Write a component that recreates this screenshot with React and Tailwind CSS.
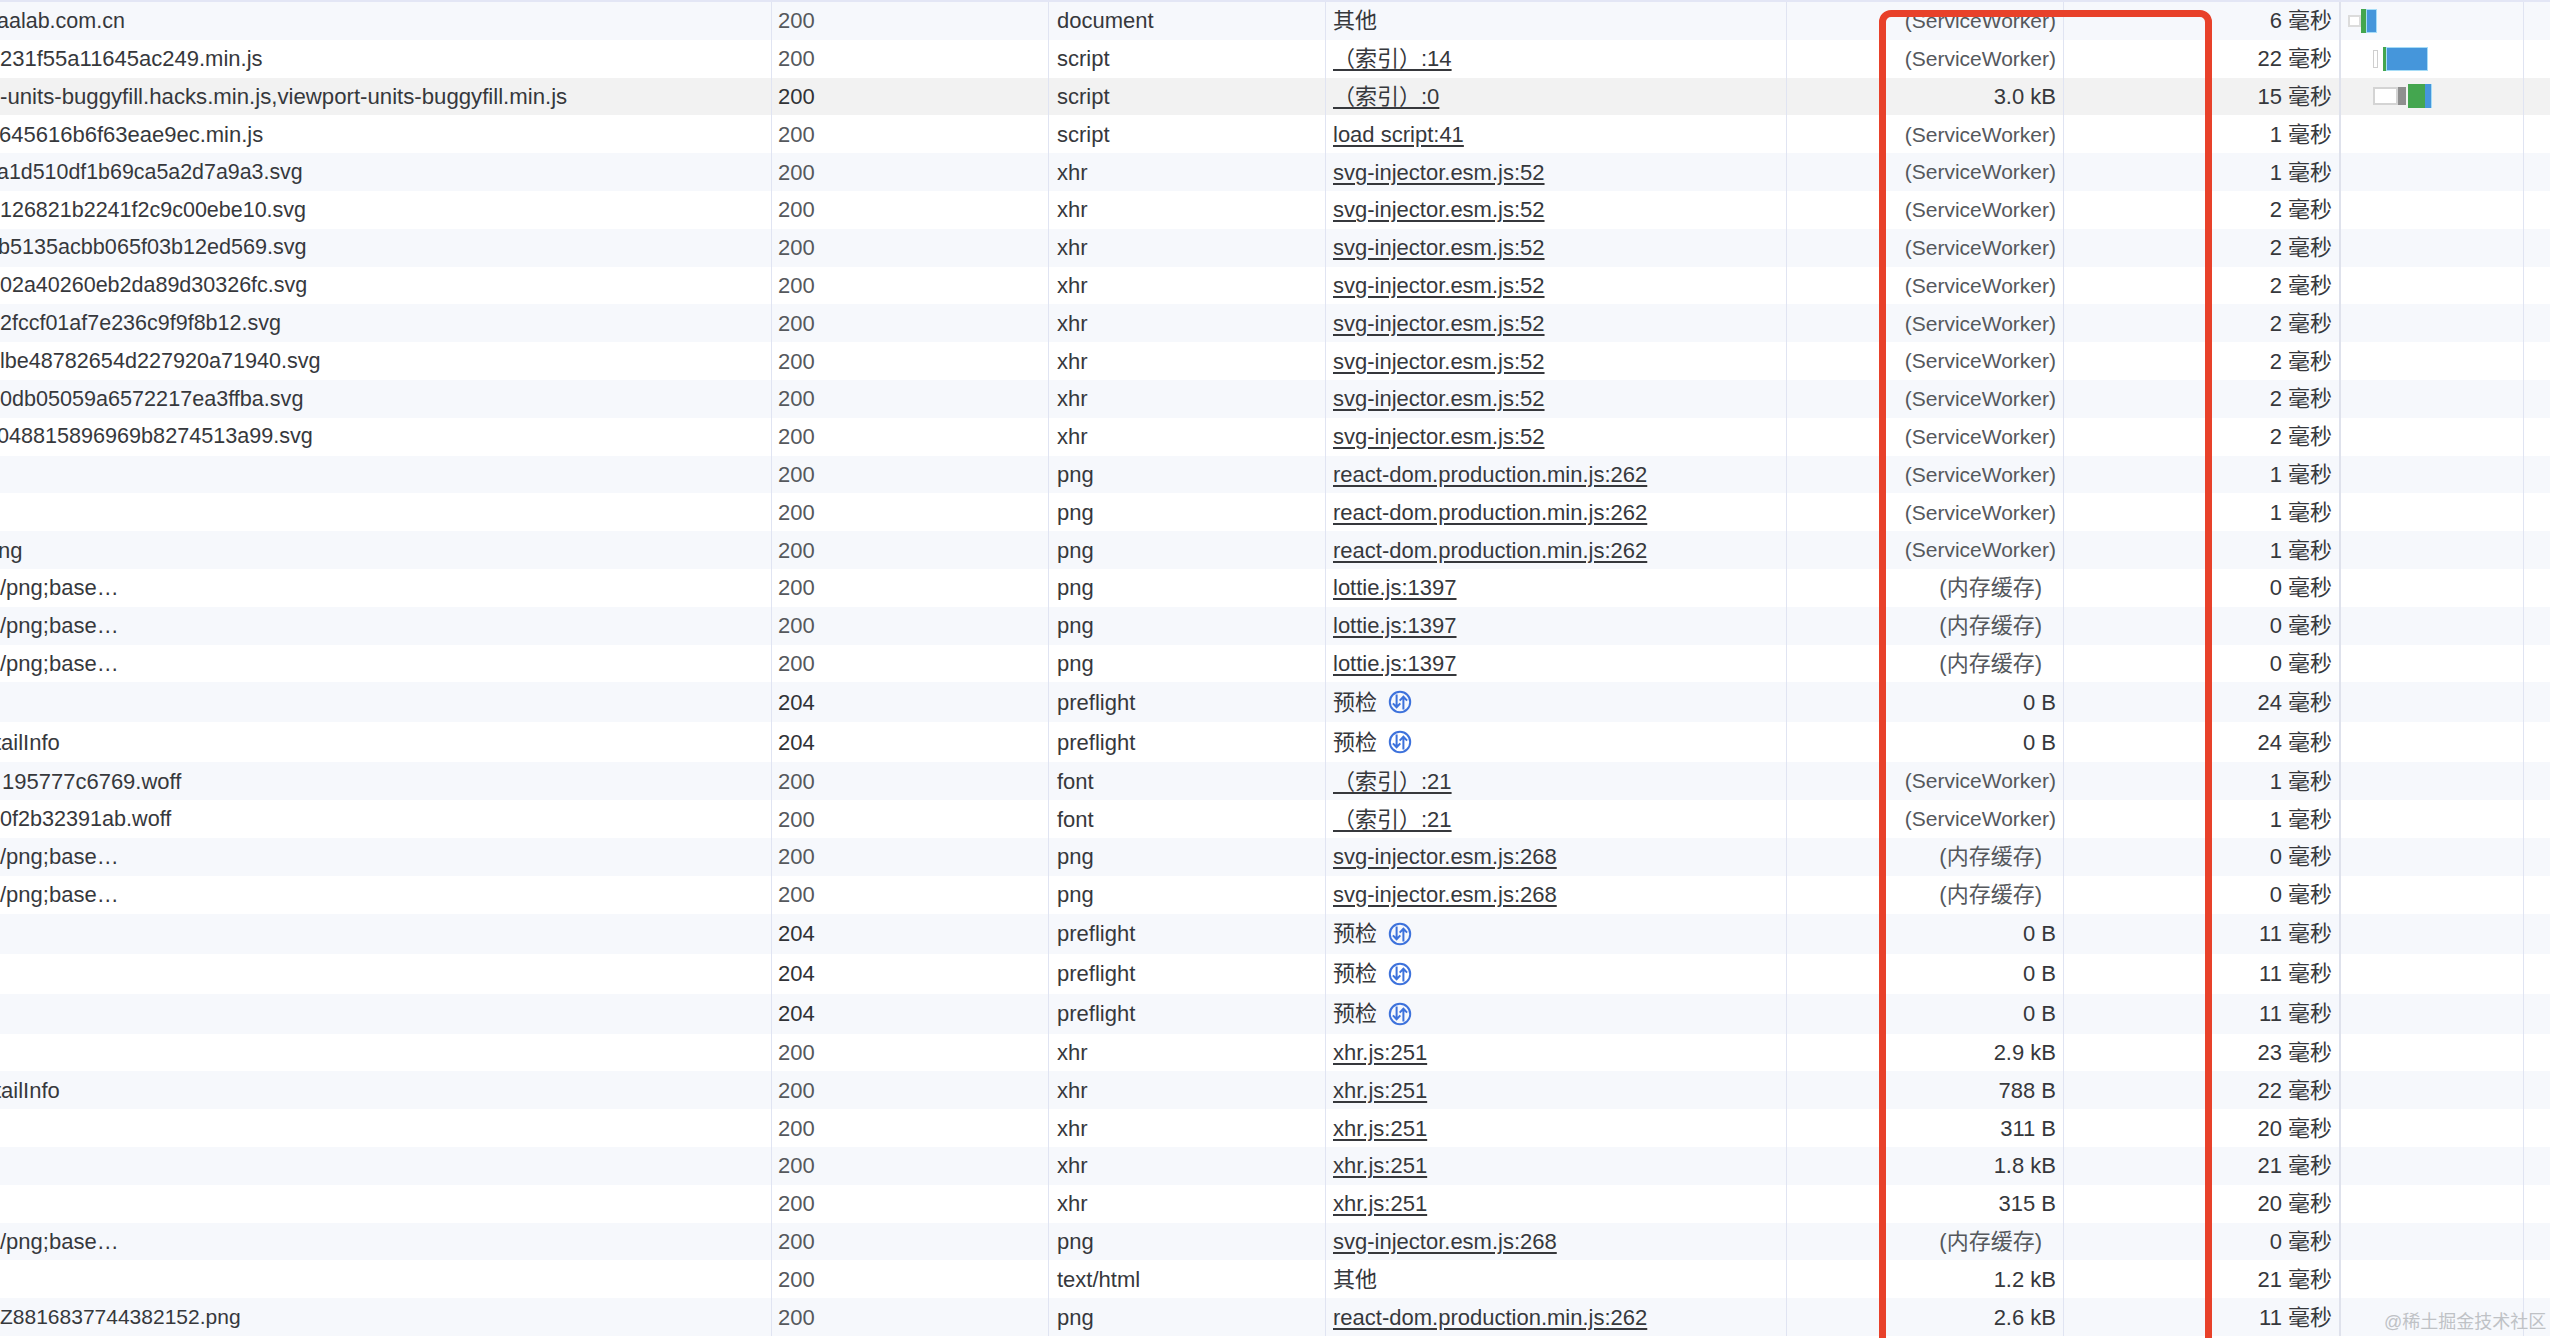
const rows = [
  { name: "aalab.com.cn", clip: "-ml-[3px] text-[21.5px]", status: "200", type: "document", initiator: "其他", plain: true, size: "(ServiceWorker)", time: "6 毫秒", bar: 0 },
  { name: "231f55a11645ac249.min.js", status: "200", type: "script", initiator: "（索引）:14", size: "(ServiceWorker)", time: "22 毫秒", bar: 1 },
  { name: "-units-buggyfill.hacks.min.js,viewport-units-buggyfill.min.js", clip: "text-[22.2px]", status: "200", type: "script", initiator: "（索引）:0", size: "3.0 kB", time: "15 毫秒", bar: 2, hover: true },
  { name: "645616b6f63eae9ec.min.js", clip: "-ml-[1px]", status: "200", type: "script", initiator: "load script:41", size: "(ServiceWorker)", time: "1 毫秒" },
  { name: "a1d510df1b69ca5a2d7a9a3.svg", clip: "-ml-[3px] text-[21.4px]", status: "200", type: "xhr", initiator: "svg-injector.esm.js:52", size: "(ServiceWorker)", time: "1 毫秒" },
  { name: "126821b2241f2c9c00ebe10.svg", clip: "text-[21.5px]", status: "200", type: "xhr", initiator: "svg-injector.esm.js:52", size: "(ServiceWorker)", time: "2 毫秒" },
  { name: "b5135acbb065f03b12ed569.svg", clip: "-ml-[2px] text-[21.6px]", status: "200", type: "xhr", initiator: "svg-injector.esm.js:52", size: "(ServiceWorker)", time: "2 毫秒" },
  { name: "02a40260eb2da89d30326fc.svg", clip: "text-[21.5px]", status: "200", type: "xhr", initiator: "svg-injector.esm.js:52", size: "(ServiceWorker)", time: "2 毫秒" },
  { name: "2fccf01af7e236c9f9f8b12.svg", clip: "text-[21.5px]", status: "200", type: "xhr", initiator: "svg-injector.esm.js:52", size: "(ServiceWorker)", time: "2 毫秒" },
  { name: "lbe48782654d227920a71940.svg", clip: "text-[21.6px]", status: "200", type: "xhr", initiator: "svg-injector.esm.js:52", size: "(ServiceWorker)", time: "2 毫秒" },
  { name: "0db05059a6572217ea3ffba.svg", clip: "text-[21.6px]", status: "200", type: "xhr", initiator: "svg-injector.esm.js:52", size: "(ServiceWorker)", time: "2 毫秒" },
  { name: "048815896969b8274513a99.svg", clip: "-ml-[3px] text-[21.6px]", status: "200", type: "xhr", initiator: "svg-injector.esm.js:52", size: "(ServiceWorker)", time: "2 毫秒" },
  { name: "", status: "200", type: "png", initiator: "react-dom.production.min.js:262", size: "(ServiceWorker)", time: "1 毫秒" },
  { name: "", status: "200", type: "png", initiator: "react-dom.production.min.js:262", size: "(ServiceWorker)", time: "1 毫秒" },
  { name: "ng", clip: "-ml-[2px]", status: "200", type: "png", initiator: "react-dom.production.min.js:262", size: "(ServiceWorker)", time: "1 毫秒" },
  { name: "/png;base…", status: "200", type: "png", initiator: "lottie.js:1397", size: "(内存缓存)", cached: true, time: "0 毫秒" },
  { name: "/png;base…", status: "200", type: "png", initiator: "lottie.js:1397", size: "(内存缓存)", cached: true, time: "0 毫秒" },
  { name: "/png;base…", status: "200", type: "png", initiator: "lottie.js:1397", size: "(内存缓存)", cached: true, time: "0 毫秒" },
  { name: "", status: "204", type: "preflight", initiator: "预检", preflight: true, size: "0 B", time: "24 毫秒" },
  { name: "tailInfo", clip: "-ml-[5px]", status: "204", type: "preflight", initiator: "预检", preflight: true, size: "0 B", time: "24 毫秒" },
  { name: "195777c6769.woff", clip: "ml-[2px]", status: "200", type: "font", initiator: "（索引）:21", size: "(ServiceWorker)", time: "1 毫秒" },
  { name: "0f2b32391ab.woff", clip: "text-[21.6px]", status: "200", type: "font", initiator: "（索引）:21", size: "(ServiceWorker)", time: "1 毫秒" },
  { name: "/png;base…", status: "200", type: "png", initiator: "svg-injector.esm.js:268", size: "(内存缓存)", cached: true, time: "0 毫秒" },
  { name: "/png;base…", status: "200", type: "png", initiator: "svg-injector.esm.js:268", size: "(内存缓存)", cached: true, time: "0 毫秒" },
  { name: "", status: "204", type: "preflight", initiator: "预检", preflight: true, size: "0 B", time: "11 毫秒" },
  { name: "", status: "204", type: "preflight", initiator: "预检", preflight: true, size: "0 B", time: "11 毫秒" },
  { name: "", status: "204", type: "preflight", initiator: "预检", preflight: true, size: "0 B", time: "11 毫秒" },
  { name: "", status: "200", type: "xhr", initiator: "xhr.js:251", size: "2.9 kB", time: "23 毫秒" },
  { name: "tailInfo", clip: "-ml-[5px]", status: "200", type: "xhr", initiator: "xhr.js:251", size: "788 B", time: "22 毫秒" },
  { name: "", status: "200", type: "xhr", initiator: "xhr.js:251", size: "311 B", time: "20 毫秒" },
  { name: "", status: "200", type: "xhr", initiator: "xhr.js:251", size: "1.8 kB", time: "21 毫秒" },
  { name: "", status: "200", type: "xhr", initiator: "xhr.js:251", size: "315 B", time: "20 毫秒" },
  { name: "/png;base…", status: "200", type: "png", initiator: "svg-injector.esm.js:268", size: "(内存缓存)", cached: true, time: "0 毫秒" },
  { name: "", status: "200", type: "text/html", initiator: "其他", plain: true, size: "1.2 kB", time: "21 毫秒" },
  { name: "Z8816837744382152.png", clip: "text-[21px]", status: "200", type: "png", initiator: "react-dom.production.min.js:262", size: "2.6 kB", time: "11 毫秒" },
];

function PreflightIcon() {
  return (
    <svg width="24" height="24" viewBox="0 0 24 24" fill="none" stroke="#3d72dc" className="ml-[11px] shrink-0">
      <circle cx="12" cy="12" r="10.2" strokeWidth="2" />
      <path d="M8.6 4.5V17M4.9 13.4l3.7 3.9 3.7-3.9" strokeWidth="2" />
      <path d="M15.4 19.5V7M11.7 10.6l3.7-3.9 3.7 3.9" strokeWidth="2" />
    </svg>
  );
}

// Waterfall bars for the first three requests only
function Waterfall({ type }) {
  if (type === 0) {
    return (
      <div className="flex h-[24px] ml-[7px]">
        <div className="w-[13px] my-[6px] border-2 border-[#dcdcdc] bg-white" />
        <div className="w-[5px] bg-[#44a64f]" />
        <div className="w-[11px] bg-[#4596db] border border-[#a6dcf7]" />
      </div>
    );
  }
  if (type === 1) {
    return (
      <div className="flex h-[24px] ml-[32px]">
        <div className="w-[5px] my-[3px] border border-[#cfcfcf] bg-white" />
        <div className="w-[3px] ml-[5px] bg-[#44a64f]" />
        <div className="w-[42px] bg-[#4596db] border border-[#a6dcf7]" />
      </div>
    );
  }
  return (
    <div className="flex h-[24px] ml-[32px]">
      <div className="w-[25px] my-[3px] border-2 border-[#d4d4d4] bg-white" />
      <div className="w-[8px] my-[3px] bg-[#8f8f8f]" />
      <div className="w-[17px] ml-[2px] bg-[#44a64f]" />
      <div className="w-[7px] bg-[#4596db] border-r border-[#a6dcf7]" />
    </div>
  );
}

function Row({ row, index }) {
  const tinted = index % 2 === 0;
  const bg = row.hover ? "bg-[#f2f2f2]" : tinted ? "bg-[#f6f8fc]" : "bg-white";
  const dark = row.hover || row.status === "204";
  const statusColor = dark ? "text-[#303236]" : "text-[#55585d]";
  const sizeColor = row.size.startsWith("(") ? "text-[#55585d]" : "text-[#36383c]";
  // (ServiceWorker) runs a bit narrower than the rest of the table
  const sizeText = row.size === "(ServiceWorker)" ? "text-[21px]" : "";

  return (
    <div className={`flex items-stretch ${row.preflight ? "h-[40px]" : "h-[37.8px]"} ${bg}`}>
      <div className="w-[772px] shrink-0 flex items-center overflow-hidden border-r border-[#e0e4f2] text-[#36383c]">
        <span className={`whitespace-nowrap ${row.clip || ""}`}>{row.name}</span>
      </div>
      <div className={`w-[277px] shrink-0 flex items-center pl-[6px] border-r border-[#e0e4f2] ${statusColor}`}>
        {row.status}
      </div>
      <div className="w-[277px] shrink-0 flex items-center pl-[8px] border-r border-[#e0e4f2] text-[#36383c]">
        {row.type}
      </div>
      <div className="w-[461px] shrink-0 flex items-center pl-[7px] border-r border-[#e0e4f2] text-[#36383c]">
        {row.plain || row.preflight ? (
          <span>{row.initiator}</span>
        ) : (
          <span className="underline underline-offset-[3px]">{row.initiator}</span>
        )}
        {row.preflight && <PreflightIcon />}
      </div>
      <div className={`w-[277px] shrink-0 flex items-center justify-end border-r border-[#e0e4f2] ${row.cached ? "pr-[21px]" : "pr-[7px]"} ${sizeColor} ${sizeText}`}>
        {row.size}
      </div>
      <div className="w-[277px] shrink-0 flex items-center justify-end pr-[7px] border-r-2 border-[#dfe2ec] text-[#36383c]">
        {row.time}
      </div>
      <div className="w-[183px] shrink-0 flex items-center border-r border-[#e0e4f2]">
        {row.bar !== undefined && <Waterfall type={row.bar} />}
      </div>
      <div className="flex-1" />
    </div>
  );
}

export default function App() {
  return (
    <div className="relative h-[1338px] w-[2550px] overflow-hidden bg-white text-[22px] font-['Liberation_Sans','Noto_Sans_CJK_SC',sans-serif]">
      <div className="h-[2px] bg-[#e3e6f5]" />
      {rows.map((row, index) => (
        <Row key={index} row={row} index={index} />
      ))}

      {/* Red annotation drawn over the size column */}
      <div className="absolute left-[1879px] top-[10px] w-[333px] h-[1400px] border-[7px] border-[#e8412a] rounded-[12px]" />

      <div className="absolute left-[2384px] top-[1309px] whitespace-nowrap text-[18px] text-[#bfc2c6]">@稀土掘金技术社区</div>
    </div>
  );
}
